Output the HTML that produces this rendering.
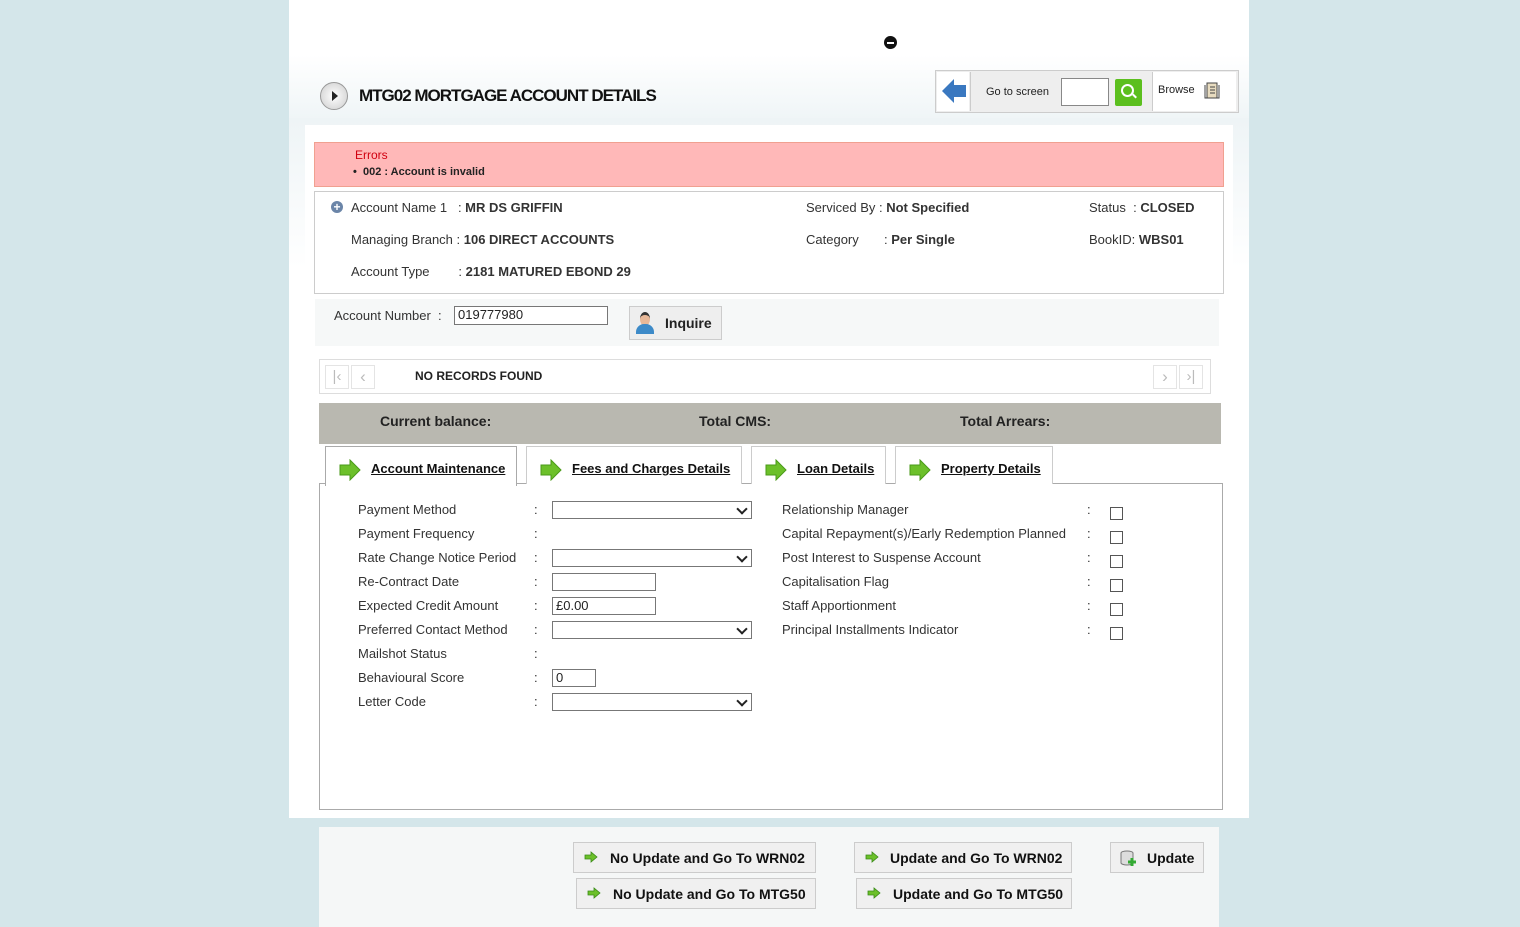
<!DOCTYPE html>
<html><head><style>
body{margin:0;width:1520px;height:927px;background:#d4e6ea;font-family:"Liberation Sans",Arial,sans-serif;font-size:13px;color:#222;position:relative;overflow:hidden}
.a{position:absolute}
.lbl{position:absolute;font-size:13px;color:#333}
.b{font-weight:bold}
.sel{position:absolute;width:198px;height:16px;border:1px solid #777;background:#fff}
.sel:after{content:"";position:absolute;right:5px;top:3px;width:6px;height:6px;border-right:2px solid #222;border-bottom:2px solid #222;transform:rotate(45deg)}
.inp{position:absolute;height:16px;border:1px solid #777;background:#fff;font-size:13px;line-height:16px;padding-left:3px;box-sizing:border-box}
.cb{position:absolute;width:11px;height:11px;border:1px solid #555;background:#fff}
.tab{position:absolute;top:446px;height:37px;border:1px solid #ccc;border-bottom:none;background:#fff;font-weight:bold;font-size:13px}
.tab span{position:absolute;top:14px;text-decoration:underline;color:#111}
.btn{position:absolute;height:31px;border:1px solid #ccc;background:#f0f0f0;font-weight:bold;font-size:14px;line-height:31px;color:#111;box-sizing:border-box}
</style></head><body>
<div class="a" style="left:289px;top:0;width:960px;height:818px;background:#fff"></div>
<div class="a" style="left:289px;top:55px;width:960px;height:70px;background:linear-gradient(#fff,#eef4f6)"></div>
<div class="a" style="left:289px;top:118px;width:960px;height:150px;background:linear-gradient(#eef4f6,#fff)"></div>
<div class="a" style="left:305px;top:125px;width:928px;height:690px;background:#fff"></div>
<div class="a" style="left:884px;top:36px;width:13px;height:13px;border-radius:50%;background:#111"></div>
<div class="a" style="left:887px;top:42px;width:7px;height:2px;background:#fff"></div>
<!-- title -->
<div class="a" style="left:320px;top:82px;width:26px;height:26px;border-radius:50%;border:1px solid #999;background:radial-gradient(#fff,#ccc)"></div>
<div class="a" style="left:332px;top:91px;border-left:6px solid #222;border-top:5px solid transparent;border-bottom:5px solid transparent"></div>
<div class="a" style="left:359px;top:86px;font-size:17px;font-weight:bold;letter-spacing:-1px;color:#111">MTG02 MORTGAGE ACCOUNT DETAILS</div>
<!-- nav box -->
<div class="a" style="left:935px;top:70px;width:302px;height:41px;border:1px solid #ccc;background:#eee"></div>
<div class="a" style="left:937px;top:72px;width:32px;height:39px;background:#fff"></div>
<svg class="a" style="left:940px;top:76px" width="28" height="30"><path d="M2 15 L14 3 L14 9 L26 9 L26 21 L14 21 L14 27 Z" fill="#3a78c0"/></svg>
<div class="a" style="left:970px;top:72px;width:1px;height:39px;background:#ccc"></div>
<div class="a" style="left:986px;top:86px;font-size:11px">Go to screen</div>
<div class="a" style="left:1061px;top:78px;width:46px;height:26px;border:1px solid #888;background:#fff"></div>
<div class="a" style="left:1115px;top:79px;width:27px;height:27px;background:#5cbf1e;border-radius:2px"></div>
<div class="a" style="left:1121px;top:84px;width:9px;height:9px;border:2px solid #fff;border-radius:50%"></div>
<div class="a" style="left:1132px;top:95px;width:5px;height:2px;background:#fff;transform:rotate(45deg)"></div>
<div class="a" style="left:1152px;top:72px;width:1px;height:39px;background:#ccc"></div>
<div class="a" style="left:1153px;top:72px;width:83px;height:39px;background:#fff"></div>
<div class="a" style="left:1158px;top:84px;font-size:11px">Browse</div>
<svg class="a" style="left:1204px;top:81px" width="18" height="19"><path d="M3 2h10v15H3z" fill="#e8dcc0" stroke="#444"/><path d="M1 4v13h2M15 4v13h-2M6 6h5M6 9h5M6 12h5" stroke="#444" fill="none"/></svg>
<!-- errors -->
<div class="a" style="left:314px;top:142px;width:908px;height:43px;background:#ffb8b8;border:1px solid #f0a090"></div>
<div class="a" style="left:355px;top:148px;color:#d00010;font-size:12px">Errors</div>
<div class="a" style="left:353px;top:166px;font-size:11px;font-weight:bold">•&nbsp; 002 : Account is invalid</div>
<!-- account info -->
<div class="a" style="left:314px;top:191px;width:908px;height:101px;border:1px solid #ccc"></div>
<div class="a" style="left:331px;top:201px;width:12px;height:12px;border-radius:50%;background:#6b85a8;color:#fff;font-size:12px;line-height:12px;text-align:center;font-weight:bold">+</div>
<div class="lbl" style="left:351px;top:200px">Account Name 1&nbsp;&nbsp; : <b>MR DS GRIFFIN</b></div>
<div class="lbl" style="left:351px;top:232px">Managing Branch : <b>106 DIRECT ACCOUNTS</b></div>
<div class="lbl" style="left:351px;top:264px">Account Type&nbsp;&nbsp;&nbsp;&nbsp;&nbsp;&nbsp;&nbsp; : <b>2181 MATURED EBOND 29</b></div>
<div class="lbl" style="left:806px;top:200px">Serviced By : <b>Not Specified</b></div>
<div class="lbl" style="left:806px;top:232px">Category&nbsp;&nbsp;&nbsp;&nbsp;&nbsp;&nbsp; : <b>Per Single</b></div>
<div class="lbl" style="left:1089px;top:200px">Status&nbsp; : <b>CLOSED</b></div>
<div class="lbl" style="left:1089px;top:232px">BookID: <b>WBS01</b></div>
<!-- account number -->
<div class="a" style="left:315px;top:299px;width:904px;height:47px;background:#f6f8f8"></div>
<div class="lbl" style="left:334px;top:308px">Account Number&nbsp; :</div>
<div class="inp" style="left:454px;top:306px;width:154px;height:19px;font-size:13px">019777980</div>
<div class="a" style="left:629px;top:306px;width:91px;height:32px;border:1px solid #ccc;background:#eee"></div>
<div class="a" style="left:640px;top:312px;width:10px;height:11px;border-radius:50%;background:#e8b898;border-top:3px solid #333"></div>
<div class="a" style="left:636px;top:324px;width:18px;height:10px;border-radius:8px 8px 0 0;background:#3d8ac8"></div>
<div class="a" style="left:665px;top:315px;font-size:14px;font-weight:bold">Inquire</div>
<!-- records -->
<div class="a" style="left:319px;top:359px;width:890px;height:33px;border:1px solid #ddd;background:#fff"></div>
<div class="a" style="left:325px;top:365px;width:22px;height:22px;border:1px solid #e4e4e4;color:#bbb;font-size:15px;line-height:22px;text-align:center">|‹</div>
<div class="a" style="left:351px;top:365px;width:22px;height:22px;border:1px solid #e4e4e4;color:#bbb;font-size:17px;line-height:22px;text-align:center">‹</div>
<div class="a" style="left:1153px;top:365px;width:22px;height:22px;border:1px solid #e4e4e4;color:#bbb;font-size:17px;line-height:22px;text-align:center">›</div>
<div class="a" style="left:1179px;top:365px;width:22px;height:22px;border:1px solid #e4e4e4;color:#bbb;font-size:15px;line-height:22px;text-align:center">›|</div>
<div class="a" style="left:415px;top:369px;font-size:12px;font-weight:bold">NO RECORDS FOUND</div>
<!-- balance bar -->
<div class="a" style="left:319px;top:403px;width:902px;height:41px;background:#b9b8b0"></div>
<div class="a b" style="left:380px;top:413px;font-size:14px">Current balance:</div>
<div class="a b" style="left:699px;top:413px;font-size:14px">Total CMS:</div>
<div class="a b" style="left:960px;top:413px;font-size:14px">Total Arrears:</div>
<!-- tabs -->
<div class="a" style="left:319px;top:483px;width:902px;height:325px;border:1px solid #aaa;background:#fff"></div>
<div class="tab" style="left:325px;width:190px;height:39px;border-color:#aaa"><span style="left:45px">Account Maintenance</span></div>
<div class="tab" style="left:526px;width:214px"><span style="left:45px">Fees and Charges Details</span></div>
<div class="tab" style="left:751px;width:133px"><span style="left:45px">Loan Details</span></div>
<div class="tab" style="left:895px;width:156px"><span style="left:45px">Property Details</span></div>
<svg class="a" style="left:338px;top:459px" width="24" height="22"><path d="M2 6h10V1l10 10-10 10v-5H2z" fill="#6cc02a" stroke="#4a9a18"/></svg>
<svg class="a" style="left:539px;top:459px" width="24" height="22"><path d="M2 6h10V1l10 10-10 10v-5H2z" fill="#6cc02a" stroke="#4a9a18"/></svg>
<svg class="a" style="left:764px;top:459px" width="24" height="22"><path d="M2 6h10V1l10 10-10 10v-5H2z" fill="#6cc02a" stroke="#4a9a18"/></svg>
<svg class="a" style="left:908px;top:459px" width="24" height="22"><path d="M2 6h10V1l10 10-10 10v-5H2z" fill="#6cc02a" stroke="#4a9a18"/></svg>
<!-- left form -->
<div class="lbl" style="left:358px;top:502px">Payment Method</div>
<div class="lbl" style="left:358px;top:526px">Payment Frequency</div>
<div class="lbl" style="left:358px;top:550px">Rate Change Notice Period</div>
<div class="lbl" style="left:358px;top:574px">Re-Contract Date</div>
<div class="lbl" style="left:358px;top:598px">Expected Credit Amount</div>
<div class="lbl" style="left:358px;top:622px">Preferred Contact Method</div>
<div class="lbl" style="left:358px;top:646px">Mailshot Status</div>
<div class="lbl" style="left:358px;top:670px">Behavioural Score</div>
<div class="lbl" style="left:358px;top:694px">Letter Code</div>
<div class="lbl" style="left:534px;top:502px">:</div>
<div class="lbl" style="left:534px;top:526px">:</div>
<div class="lbl" style="left:534px;top:550px">:</div>
<div class="lbl" style="left:534px;top:574px">:</div>
<div class="lbl" style="left:534px;top:598px">:</div>
<div class="lbl" style="left:534px;top:622px">:</div>
<div class="lbl" style="left:534px;top:646px">:</div>
<div class="lbl" style="left:534px;top:670px">:</div>
<div class="lbl" style="left:534px;top:694px">:</div>
<div class="sel" style="left:552px;top:501px"></div>
<div class="sel" style="left:552px;top:549px"></div>
<div class="inp" style="left:552px;top:573px;width:104px;height:18px"></div>
<div class="inp" style="left:552px;top:597px;width:104px;height:18px">£0.00</div>
<div class="sel" style="left:552px;top:621px"></div>
<div class="inp" style="left:552px;top:669px;width:44px;height:18px">0</div>
<div class="sel" style="left:552px;top:693px"></div>
<!-- right form -->
<div class="lbl" style="left:782px;top:502px">Relationship Manager</div>
<div class="lbl" style="left:782px;top:526px">Capital Repayment(s)/Early Redemption Planned</div>
<div class="lbl" style="left:782px;top:550px">Post Interest to Suspense Account</div>
<div class="lbl" style="left:782px;top:574px">Capitalisation Flag</div>
<div class="lbl" style="left:782px;top:598px">Staff Apportionment</div>
<div class="lbl" style="left:782px;top:622px">Principal Installments Indicator</div>
<div class="lbl" style="left:1087px;top:502px">:</div>
<div class="lbl" style="left:1087px;top:526px">:</div>
<div class="lbl" style="left:1087px;top:550px">:</div>
<div class="lbl" style="left:1087px;top:574px">:</div>
<div class="lbl" style="left:1087px;top:598px">:</div>
<div class="lbl" style="left:1087px;top:622px">:</div>
<div class="cb" style="left:1110px;top:507px"></div>
<div class="cb" style="left:1110px;top:531px"></div>
<div class="cb" style="left:1110px;top:555px"></div>
<div class="cb" style="left:1110px;top:579px"></div>
<div class="cb" style="left:1110px;top:603px"></div>
<div class="cb" style="left:1110px;top:627px"></div>
<!-- bottom -->
<div class="a" style="left:319px;top:827px;width:900px;height:100px;background:#f5f7f7"></div>
<div class="btn" style="left:573px;top:842px;width:243px;padding-left:36px">No Update and Go To WRN02</div>
<div class="btn" style="left:576px;top:878px;width:240px;padding-left:36px">No Update and Go To MTG50</div>
<div class="btn" style="left:854px;top:842px;width:218px;padding-left:35px">Update and Go To WRN02</div>
<div class="btn" style="left:856px;top:878px;width:216px;padding-left:36px">Update and Go To MTG50</div>
<div class="btn" style="left:1110px;top:842px;width:94px;padding-left:36px">Update</div>
<svg class="a" style="left:584px;top:851px" width="14" height="12"><path d="M1 4h6V1l6 5-6 5V8H1z" fill="#6cc02a" stroke="#3a8a18" stroke-width=".8"/></svg>
<svg class="a" style="left:587px;top:887px" width="14" height="12"><path d="M1 4h6V1l6 5-6 5V8H1z" fill="#6cc02a" stroke="#3a8a18" stroke-width=".8"/></svg>
<svg class="a" style="left:865px;top:851px" width="14" height="12"><path d="M1 4h6V1l6 5-6 5V8H1z" fill="#6cc02a" stroke="#3a8a18" stroke-width=".8"/></svg>
<svg class="a" style="left:867px;top:887px" width="14" height="12"><path d="M1 4h6V1l6 5-6 5V8H1z" fill="#6cc02a" stroke="#3a8a18" stroke-width=".8"/></svg>
<svg class="a" style="left:1120px;top:850px" width="18" height="18"><ellipse cx="7" cy="3" rx="6" ry="2" fill="#ddd" stroke="#777"/><path d="M1 3v10c0 1 3 2 6 2s6-1 6-2V3" fill="#ddd" stroke="#777"/><path d="M12 8v8M8 12h8" stroke="#3a3" stroke-width="3"/></svg>
</body></html>
